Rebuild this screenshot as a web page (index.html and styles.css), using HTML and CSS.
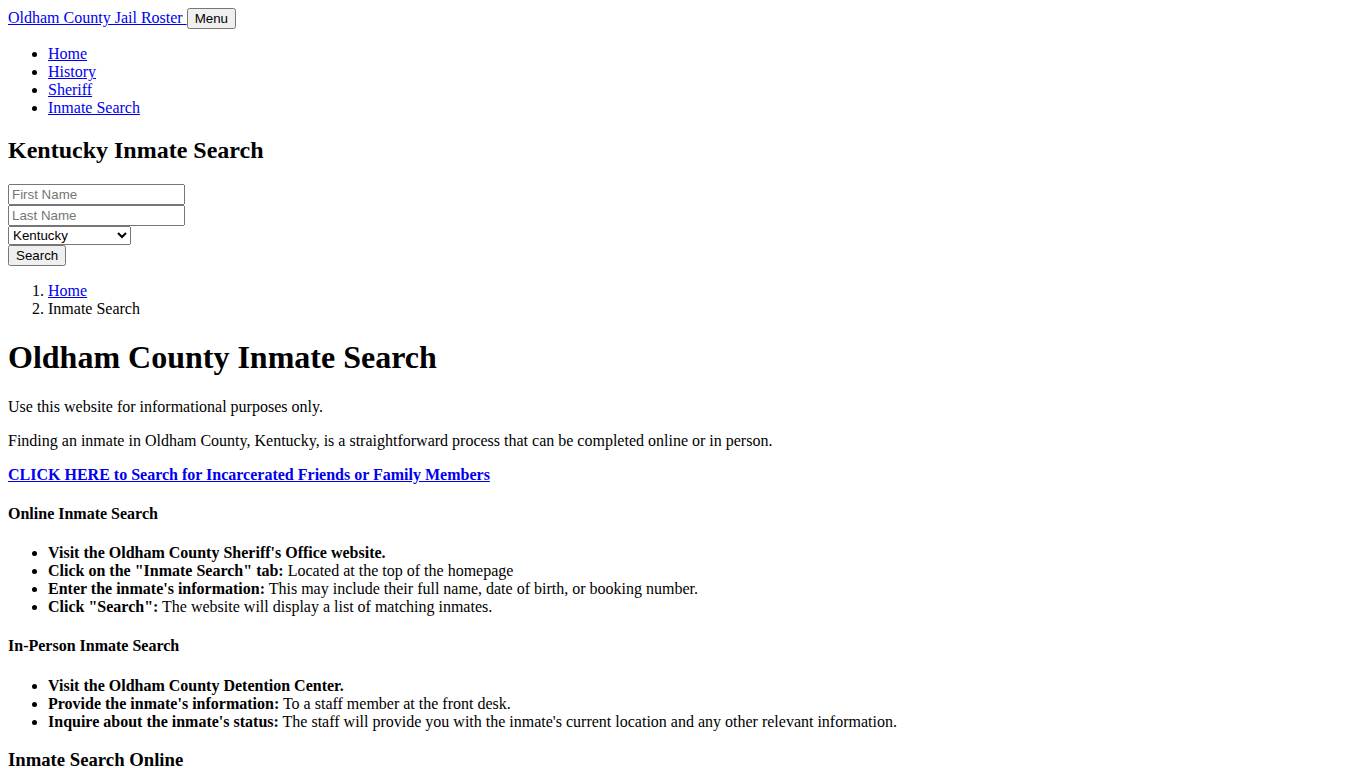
FILE: index.html
```html
<!DOCTYPE html>
<html lang="en">
<head>
<meta charset="utf-8">
<title>Oldham County Inmate Search</title>
<link rel="stylesheet" href="styles.css">
</head>
<body>
<header class="site-header">
  <div class="brand-row"><a href="#" class="brand">Oldham County Jail Roster </a><button class="menu-btn" type="button">Menu</button></div>
  <nav class="main-nav">
    <ul>
      <li><a href="#">Home</a></li>
      <li><a href="#">History</a></li>
      <li><a href="#">Sheriff</a></li>
      <li><a href="#">Inmate Search</a></li>
    </ul>
  </nav>
</header>
<section class="search-box">
  <h2>Kentucky Inmate Search</h2>
  <form class="search-form">
    <div class="field"><input class="text-input" type="text" placeholder="First Name"></div>
    <div class="field"><input class="text-input" type="text" placeholder="Last Name"></div>
    <div class="field"><select class="state-select">
      <option>Alabama</option><option>Alaska</option><option>Arizona</option><option>Arkansas</option><option>California</option><option>Colorado</option><option>Connecticut</option><option>Delaware</option><option>Florida</option><option>Georgia</option><option>Hawaii</option><option>Idaho</option><option>Illinois</option><option>Indiana</option><option>Iowa</option><option>Kansas</option><option selected>Kentucky</option><option>Louisiana</option><option>Maine</option><option>Maryland</option><option>Massachusetts</option><option>Michigan</option><option>Minnesota</option><option>Mississippi</option><option>Missouri</option><option>Montana</option><option>Nebraska</option><option>Nevada</option><option>New Hampshire</option><option>New Jersey</option><option>New Mexico</option><option>New York</option><option>North Carolina</option><option>North Dakota</option><option>Ohio</option><option>Oklahoma</option><option>Oregon</option><option>Pennsylvania</option><option>Rhode Island</option><option>South Carolina</option><option>South Dakota</option><option>Tennessee</option><option>Texas</option><option>Utah</option><option>Vermont</option><option>Virginia</option><option>Washington</option><option>West Virginia</option><option>Wisconsin</option><option>Wyoming</option>
    </select></div>
    <div class="field"><button class="search-btn" type="submit">Search</button></div>
  </form>
</section>
<main>
  <ol class="breadcrumb">
    <li><a href="#">Home</a></li>
    <li>Inmate Search</li>
  </ol>
  <h1>Oldham County Inmate Search</h1>
  <p>Use this website for informational purposes only.</p>
  <p>Finding an inmate in Oldham County, Kentucky, is a straightforward process that can be completed online or in person.</p>
  <p><strong><a href="#">CLICK HERE to Search for Incarcerated Friends or Family Members</a></strong></p>
  <h4>Online Inmate Search</h4>
  <ul>
    <li><strong>Visit the Oldham County Sheriff's Office website.</strong></li>
    <li><strong>Click on the "Inmate Search" tab:</strong> Located at the top of the homepage</li>
    <li><strong>Enter the inmate's information:</strong> This may include their full name, date of birth, or booking number.</li>
    <li><strong>Click "Search":</strong> The website will display a list of matching inmates.</li>
  </ul>
  <h4>In-Person Inmate Search</h4>
  <ul>
    <li><strong>Visit the Oldham County Detention Center.</strong></li>
    <li><strong>Provide the inmate's information:</strong> To a staff member at the front desk.</li>
    <li><strong>Inquire about the inmate's status:</strong> The staff will provide you with the inmate's current location and any other relevant information.</li>
  </ul>
  <h3>Inmate Search Online</h3>
</main>
</body>
</html>
```
FILE: styles.css
```css
body {
  font-family: "Liberation Serif", "Times New Roman", serif;
  font-size: 16px;
  color: #000;
  background: #fff;
  margin: 8px;
}
a { color: #0000ee; }
.menu-btn, .search-btn, .text-input, .state-select {
  font-family: "Liberation Sans", Arial, sans-serif;
  font-size: 13.3333px;
}
.text-input { width: 177px; box-sizing: border-box; }
.state-select { width: 123px; box-sizing: border-box; }
.search-form { margin: 0; }
```
